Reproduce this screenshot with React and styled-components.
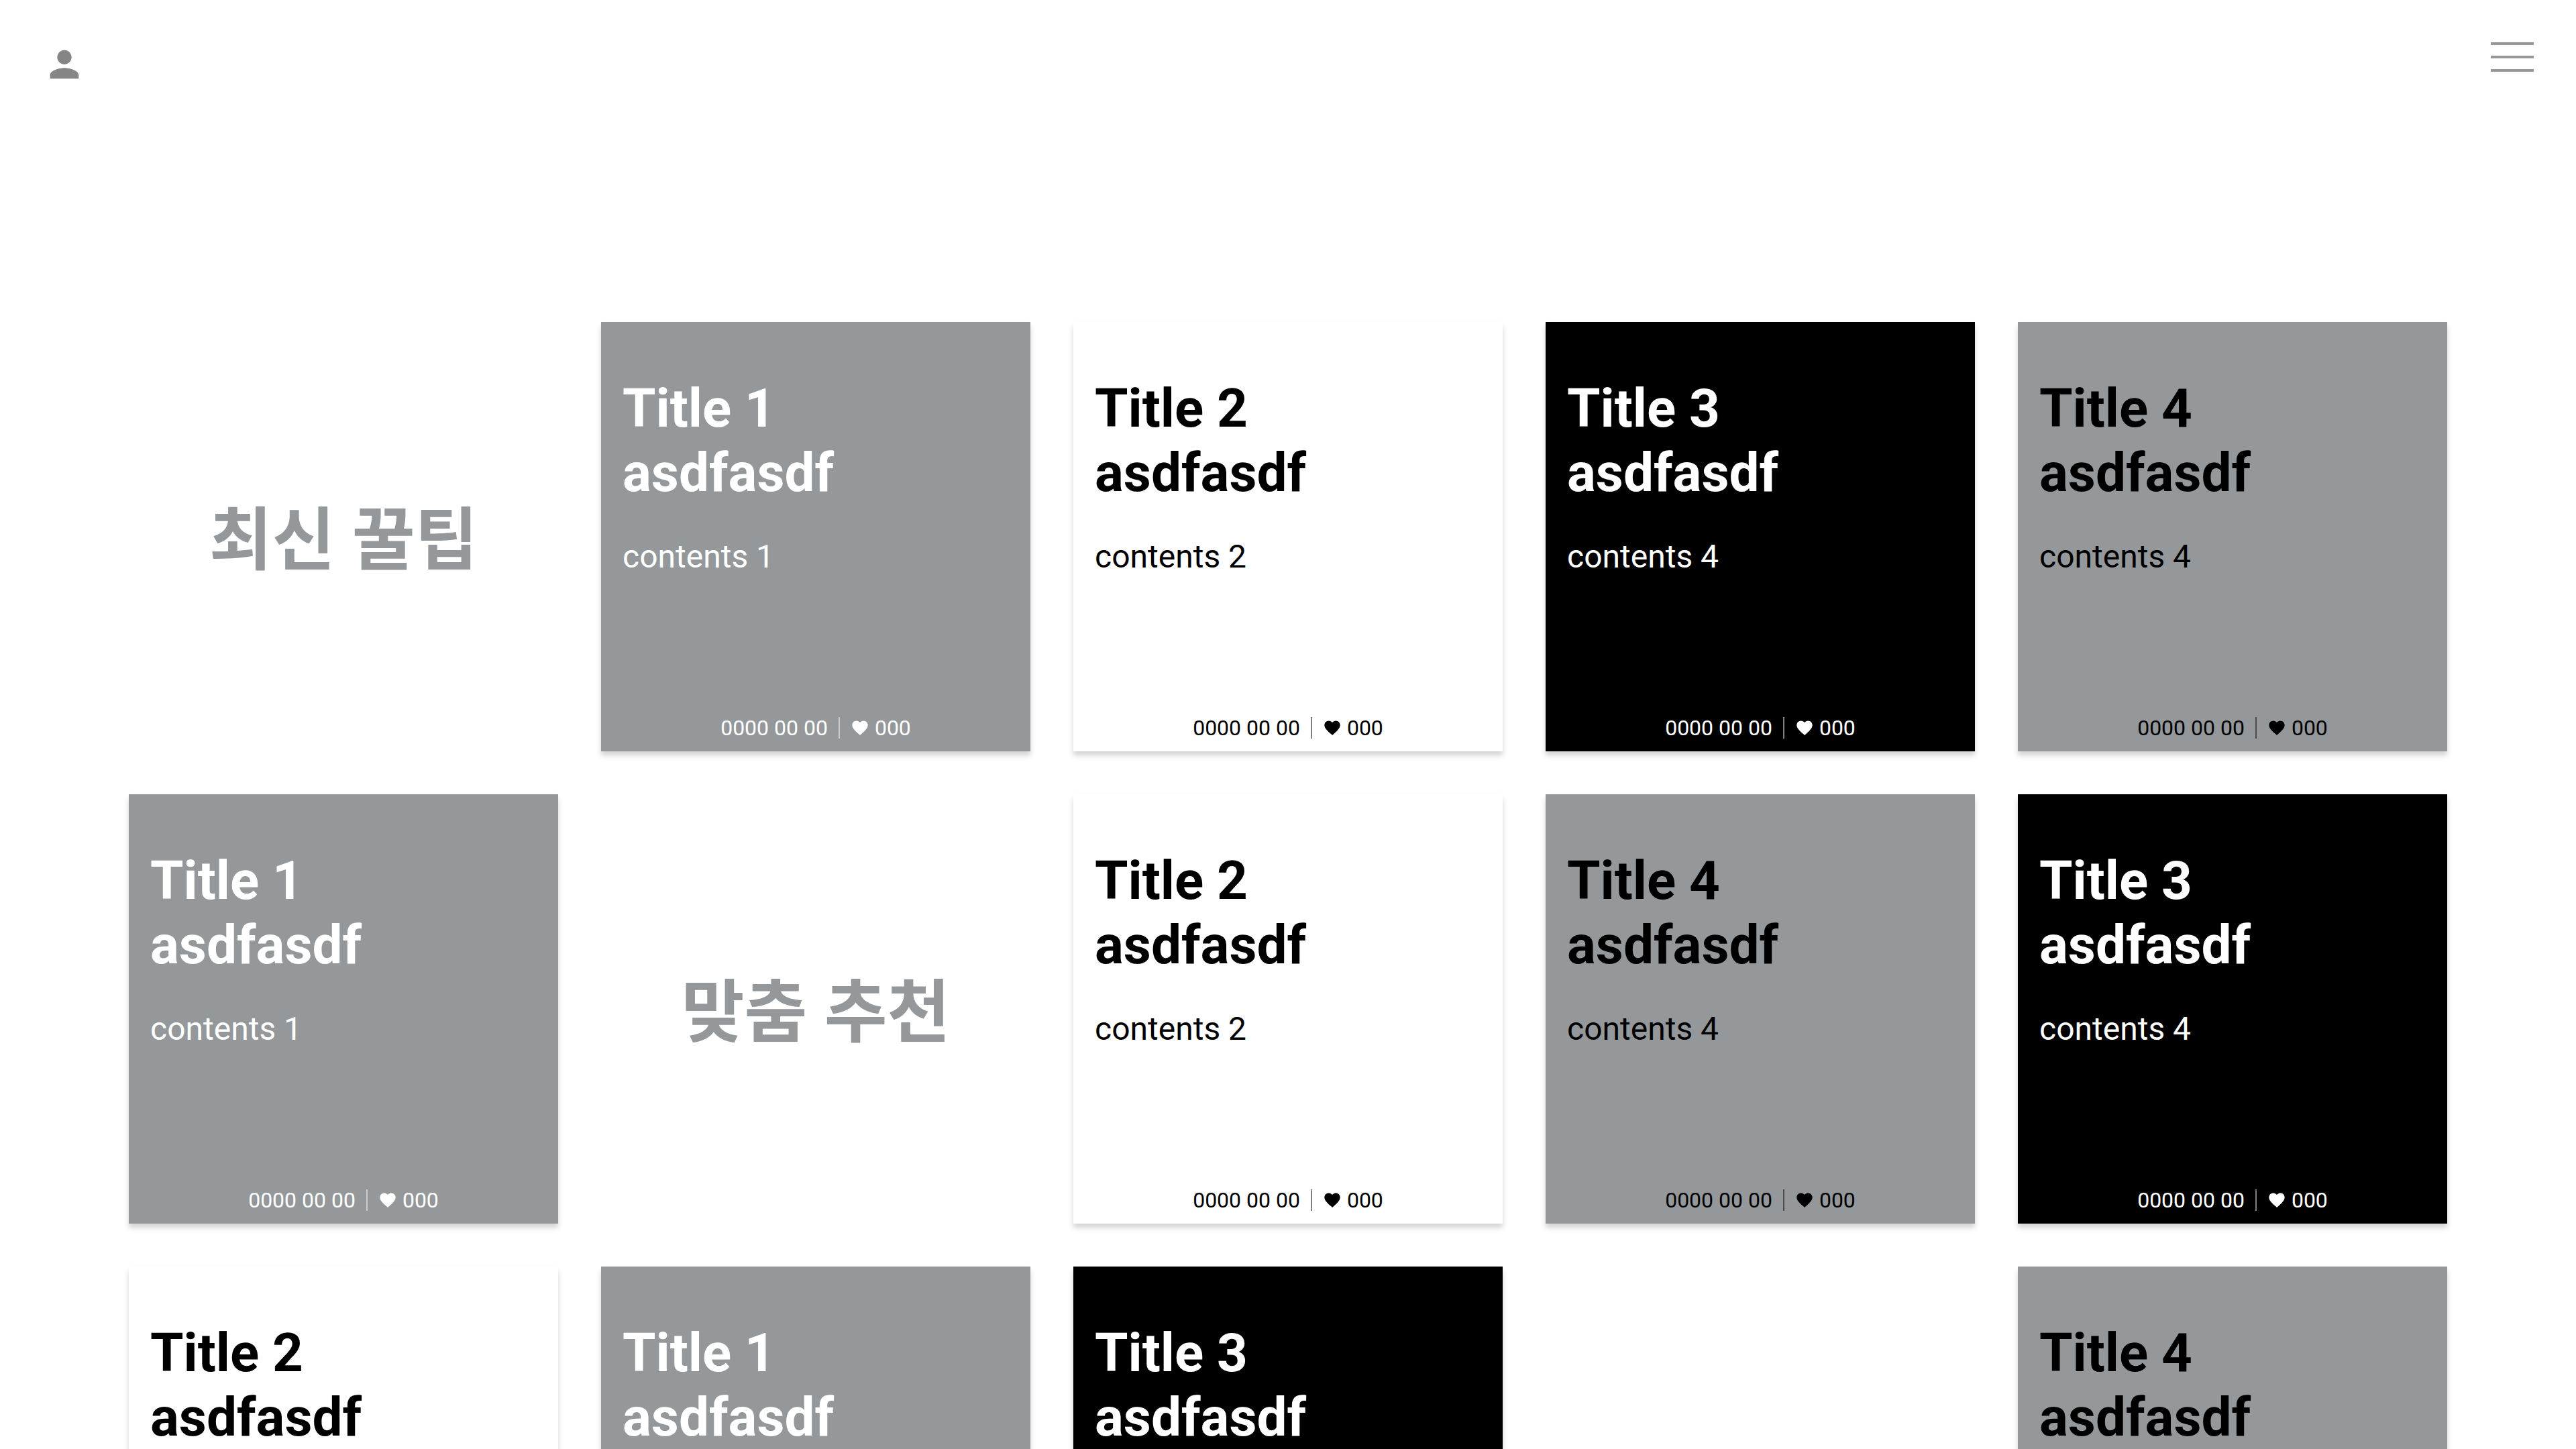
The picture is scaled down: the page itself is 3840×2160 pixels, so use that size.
import React from "react";
import styled, { createGlobalStyle } from "styled-components";

const GlobalStyle = createGlobalStyle`
  *, *::before, *::after { box-sizing: border-box; }
  html { scrollbar-width: none; }
  html, body { margin: 0; padding: 0; }
  body {
    background: #fff;
    font-family: Roboto, "Noto Sans CJK KR", sans-serif;
    color: #000;
  }
`;

const GREY = "#94989a";

const themes = {
  grey: { background: GREY, color: "#fff" },
  white: { background: "#fff", color: "#000" },
  black: { background: "#000", color: "#fff" },
  greyDark: { background: GREY, color: "#000" },
};

const Header = styled.header`
  display: flex;
  justify-content: space-between;
  align-items: flex-start;
  padding: 48px 47px 0 48px;
`;

const IconButton = styled.button`
  display: flex;
  align-items: center;
  justify-content: center;
  width: 96px;
  height: 96px;
  padding: 0;
  border: 0;
  background: none;
  color: #858585;
  cursor: pointer;

  svg {
    width: 64px;
    height: 64px;
    fill: currentColor;
  }
`;

const MenuButton = styled.button`
  display: flex;
  flex-direction: column;
  justify-content: center;
  align-items: center;
  gap: 16px;
  width: 96px;
  height: 74px;
  padding: 0;
  border: 0;
  background: none;
  cursor: pointer;
`;

const MenuLine = styled.span`
  width: 64px;
  height: 4px;
  background: ${GREY};
`;

const Grid = styled.main`
  display: grid;
  grid-template-columns: repeat(5, 1fr);
  gap: 64px;
  padding: 336px 5% 192px;
`;

const SectionTitle = styled.h2`
  display: flex;
  align-items: center;
  justify-content: center;
  aspect-ratio: 1;
  margin: 0;
  padding-top: 12px;
  color: ${GREY};
  font-size: 102px;
  font-weight: 700;
  line-height: 144px;
`;

const Blank = styled.div`
  aspect-ratio: 1;
`;

const Card = styled.article`
  display: flex;
  flex-direction: column;
  aspect-ratio: 1;
  padding: 81px 32px 16px;
  background: ${(p) => themes[p.$tone].background};
  color: ${(p) => themes[p.$tone].color};
  box-shadow: 0 6px 8px rgba(0, 0, 0, 0.18);
`;

const CardTitle = styled.h3`
  margin: 0 0 48px;
  font-size: 80px;
  font-weight: 700;
  line-height: 96px;
  white-space: pre-line;
`;

const CardText = styled.p`
  margin: 0;
  font-size: 48px;
  line-height: 58px;
`;

const Meta = styled.footer`
  display: flex;
  align-items: center;
  justify-content: center;
  gap: 16px;
  margin-top: auto;
  font-size: 32px;
  line-height: 38px;
`;

const Divider = styled.span`
  width: 2px;
  height: 32px;
  background: currentColor;
  opacity: 0.5;
`;

const Likes = styled.span`
  display: flex;
  align-items: center;
  gap: 8px;

  svg {
    width: 28px;
    height: 28px;
    fill: currentColor;
  }
`;

const PersonIcon = () => (
  <svg viewBox="0 0 24 24" aria-hidden="true">
    <path d="M12 12c2.21 0 4-1.79 4-4s-1.79-4-4-4-4 1.79-4 4 1.79 4 4 4zm0 2c-2.67 0-8 1.34-8 4v2h16v-2c0-2.66-5.33-4-8-4z" />
  </svg>
);

const HeartIcon = () => (
  <svg viewBox="0 0 24 24" aria-hidden="true">
    <path d="M12 21.35l-1.45-1.32C5.4 15.36 2 12.28 2 8.5 2 5.42 4.42 3 7.5 3c1.74 0 3.41.81 4.5 2.09C13.09 3.81 14.76 3 16.5 3 19.58 3 22 5.42 22 8.5c0 3.78-3.4 6.86-8.55 11.54L12 21.35z" />
  </svg>
);

const tips = {
  one: { tone: "grey", title: "Title 1\nasdfasdf", text: "contents 1" },
  two: { tone: "white", title: "Title 2\nasdfasdf", text: "contents 2" },
  three: { tone: "black", title: "Title 3\nasdfasdf", text: "contents 4" },
  four: { tone: "greyDark", title: "Title 4\nasdfasdf", text: "contents 4" },
};

const cells = [
  { heading: "최신 꿀팁" }, tips.one, tips.two, tips.three, tips.four,
  tips.one, { heading: "맞춤 추천" }, tips.two, tips.four, tips.three,
  tips.two, tips.one, tips.three, { blank: true }, tips.four,
];

const TipCard = ({ tone, title, text }) => (
  <Card $tone={tone}>
    <CardTitle>{title}</CardTitle>
    <CardText>{text}</CardText>
    <Meta>
      <span>0000 00 00</span>
      <Divider />
      <Likes>
        <HeartIcon />
        000
      </Likes>
    </Meta>
  </Card>
);

export default function App() {
  return (
    <>
      <GlobalStyle />
      <Header>
        <IconButton type="button" aria-label="Profile">
          <PersonIcon />
        </IconButton>
        <MenuButton type="button" aria-label="Menu">
          <MenuLine />
          <MenuLine />
          <MenuLine />
        </MenuButton>
      </Header>
      <Grid>
        {cells.map((cell, i) => {
          if (cell.heading) return <SectionTitle key={i}>{cell.heading}</SectionTitle>;
          if (cell.blank) return <Blank key={i} />;
          return <TipCard key={i} {...cell} />;
        })}
      </Grid>
    </>
  );
}
